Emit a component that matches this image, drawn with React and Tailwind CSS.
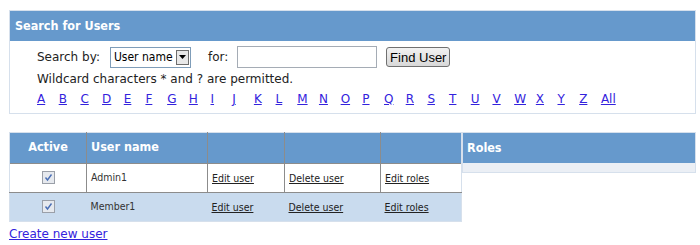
import React from "react";

const letters = "ABCDEFGHIJKLMNOPQRSTUVWXYZ".split("");
const cond = "font-['DejaVu_Sans_Condensed','DejaVu_Sans',sans-serif]";

function Check() {
  return (
    <span className="inline-flex h-[13px] w-[13px] items-center justify-center border border-[#9a9fa8] bg-[#e6e9ee]">
      <svg width="9" height="9" viewBox="0 0 9 9">
        <path d="M1.5 4.5 L3.5 7 L7.5 1.5" fill="none" stroke="#4a6fb5" strokeWidth="1.4" />
      </svg>
    </span>
  );
}

function Row({ name, bg, last }) {
  const cell = last ? "" : "border-r border-[#8c8c8c]";
  const link = `${cond} text-[10.5px] text-[#222] underline`;
  return (
    <tr className={`${bg} h-[29px] ${last ? "" : "border-b border-[#8c8c8c]"}`}>
      <td className={`${cell} text-center align-middle`}>
        <span className="inline-flex pt-[2px]"><Check /></span>
      </td>
      <td className={`${cell} pl-[4px] ${cond} text-[10.5px] text-[#333]`}>{name}</td>
      <td className={`${cell} pl-[4px]`}><a className={link}>Edit user</a></td>
      <td className={`${cell} pl-[4px]`}><a className={link}>Delete user</a></td>
      <td className="pl-[4px]"><a className={link}>Edit roles</a></td>
    </tr>
  );
}

export default function App() {
  return (
    <div className="h-[245px] w-[700px] bg-white pt-[10px] pl-[9px] font-['DejaVu_Sans',sans-serif] text-[12px] text-[#222]">
      <div className="w-[687px] border border-[#d6e0ec]">
        <div className={`flex h-[30px] items-center bg-[#6699cc] pl-[5px] ${cond} text-[12.5px] font-bold text-white`}>
          Search for Users
        </div>
        <div className="pl-[27px] pt-[5px] pb-[4px]">
          <div className="flex h-[22px] items-center">
            <span>Search by:</span>
            <div className="ml-[10px] flex h-[21px] w-[81px] items-center border border-[#7f9db9] bg-white pl-[3px]">
              <span className={`flex-1 overflow-hidden whitespace-nowrap ${cond} text-[12px] text-black`}>User name</span>
              <span className="mr-[1px] flex h-[15px] w-[13px] shrink-0 items-center justify-center border border-[#6d6d6d] bg-[#e8e8e8]">
                <svg width="7" height="4" viewBox="0 0 7 4"><path d="M0 0 H7 L3.5 4 Z" fill="#000" /></svg>
              </span>
            </div>
            <span className="ml-[17px]">for:</span>
            <div className="ml-[9px] h-[22px] w-[140px] border border-[#a5acb5] bg-white" />
            <button className="ml-[9px] h-[20px] w-[64px] rounded-[3px] border border-[#707070] bg-gradient-to-b from-[#f2f2f2] to-[#d8d8d8] font-['Liberation_Sans',sans-serif] text-[13px] text-black">
              Find User
            </button>
          </div>
          <div className="flex h-[21px] items-center">Wildcard characters * and ? are permitted.</div>
          <div className="flex h-[20px] items-center">
            {letters.map((l) => (
              <a key={l} className="w-[21.7px] text-[#3322dd] underline">{l}</a>
            ))}
            <a className="text-[#3322dd] underline">All</a>
          </div>
        </div>
      </div>

      <div className="mt-[18px] flex items-start">
        <table className="w-[452px] table-fixed border-collapse border border-[#d6e0ec]">
          <colgroup>
            <col className="w-[77px]" />
            <col className="w-[121px]" />
            <col className="w-[77px]" />
            <col className="w-[96px]" />
            <col className="w-[81px]" />
          </colgroup>
          <thead>
            <tr className={`h-[30px] bg-[#6699cc] ${cond} text-[12.5px] font-bold text-white`}>
              <th className="border-r border-[#8c8c8c] text-center">Active</th>
              <th className="border-r border-[#8c8c8c] pl-[4px] text-left">User name</th>
              <th className="border-r border-[#8c8c8c]"></th>
              <th className="border-r border-[#8c8c8c]"></th>
              <th></th>
            </tr>
          </thead>
          <tbody>
            <tr className="h-[1px] bg-[#8c8c8c]"><td colSpan={5} className="p-0"></td></tr>
            <Row name="Admin1" bg="bg-white" />
            <Row name="Member1" bg="bg-[#c9dbee]" last />
          </tbody>
        </table>
        <div className="w-[234px] border border-[#d6e0ec]">
          <div className={`flex h-[30px] items-center bg-[#6699cc] pl-[4px] ${cond} text-[12.5px] font-bold text-white`}>Roles</div>
          <div className="h-[9px] bg-[#ebeff5]" />
        </div>
      </div>
      <a className="mt-[3px] block w-fit text-[12px] text-[#3322dd] underline">Create new user</a>
    </div>
  );
}
